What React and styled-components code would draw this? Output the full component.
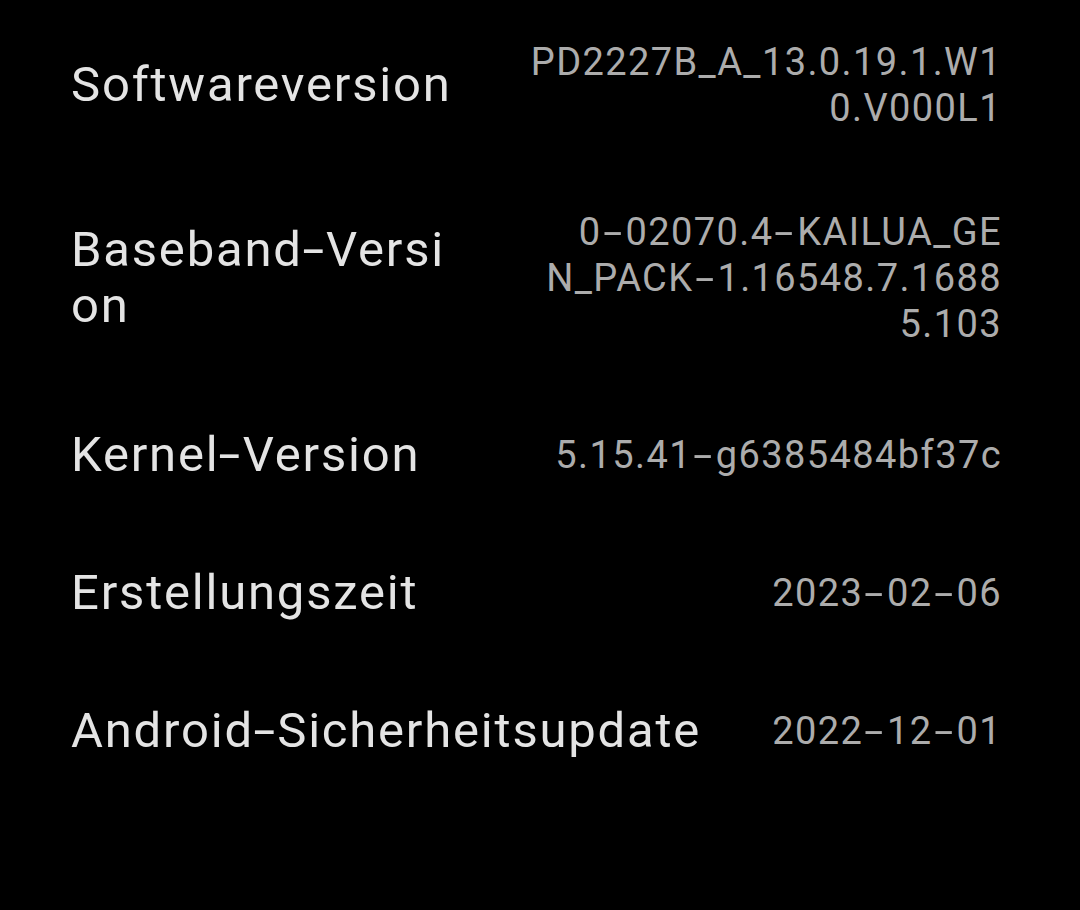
import React from "react";
import styled, { createGlobalStyle } from "styled-components";

const Global = createGlobalStyle`
  html, body {
    margin: 0;
    padding: 0;
    background: #000;
  }
  body {
    font-family: Roboto, "Noto Sans", "Liberation Sans", sans-serif;
  }
`;

const Page = styled.div`
  width: 1080px;
  height: 910px;
  background: #000;
  display: flex;
  flex-direction: column;
  padding: 0 78px 0 71px;
  box-sizing: border-box;
  overflow: hidden;
`;

const Row = styled.div`
  display: flex;
  justify-content: space-between;
  align-items: center;
  min-height: 138px;
  padding: 39px 0;
  box-sizing: border-box;
  gap: 40px;
`;

const Label = styled.div`
  color: #e4e4e4;
  font-size: 49px;
  line-height: 56px;
  letter-spacing: 1.8px;
  white-space: nowrap;
`;

const Value = styled.div`
  color: #acacac;
  font-size: 38px;
  line-height: 46px;
  letter-spacing: 1.4px;
  text-align: right;
  white-space: nowrap;
`;

const Line = styled.span`
  display: block;
`;

const Dash = styled.span`
  display: inline-block;
  transform: scaleX(${(p) => p.$scale});
  margin: 0 ${(p) => p.$space}px;
`;

function withDashes(text, space, scale) {
  const parts = text.split("-");
  const out = [];
  parts.forEach((part, i) => {
    if (i > 0)
      out.push(
        <Dash key={"d" + i} $space={space} $scale={scale}>
          -
        </Dash>
      );
    out.push(part);
  });
  return out;
}

const items = [
  { label: ["Softwareversion"], value: ["PD2227B_A_13.0.19.1.W1", "0.V000L1"] },
  {
    label: ["Baseband-Versi", "on"],
    value: ["0-02070.4-KAILUA_GE", "N_PACK-1.16548.7.1688", "5.103"],
  },
  { label: ["Kernel-Version"], value: ["5.15.41-g6385484bf37c"] },
  { label: ["Erstellungszeit"], value: ["2023-02-06"] },
  { label: ["Android-Sicherheitsupdate"], value: ["2022-12-01"] },
];

export default function App() {
  return (
    <>
      <Global />
      <Page>
        {items.map((it) => (
          <Row key={it.label.join("")}>
            <Label>
              {it.label.map((l) => (
                <Line key={l}>{withDashes(l, 4, 1.6)}</Line>
              ))}
            </Label>
            <Value>
              {it.value.map((v) => (
                <Line key={v}>{withDashes(v, 6, 1.8)}</Line>
              ))}
            </Value>
          </Row>
        ))}
      </Page>
    </>
  );
}
